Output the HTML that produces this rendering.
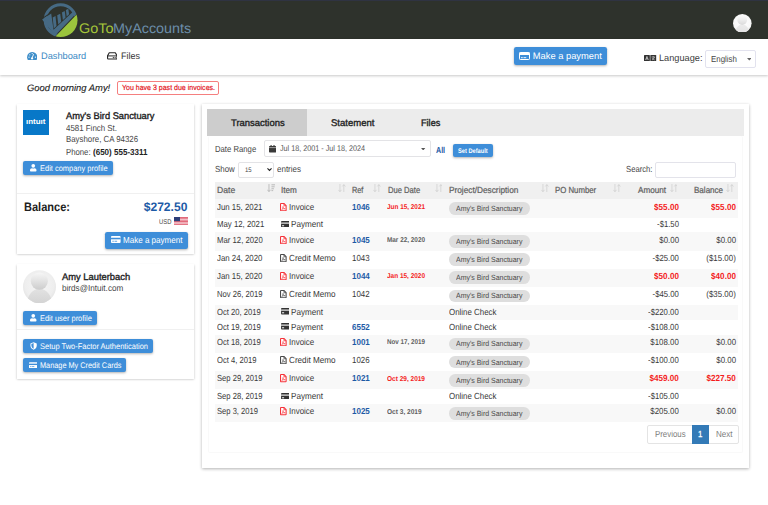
<!DOCTYPE html><html lang="en"><head><meta charset="utf-8"><title>GoToMyAccounts - Dashboard</title><style>

html,body{margin:0;padding:0;}
body{width:768px;height:505px;position:relative;overflow:hidden;background:#fff;font-family:"Liberation Sans",sans-serif;text-rendering:geometricPrecision;}
.b{position:absolute;display:block;}
.t{position:absolute;white-space:nowrap;display:block;transform-origin:0 0;}

</style></head><body>
<div class="b" style="left:0.00px;top:0.00px;width:768.00px;height:39.30px;background:#2e322c;"></div>
<div class="b" style="left:0.00px;top:0.00px;width:768.00px;height:1.30px;background:#2f3342;"></div>
<div class="b" style="left:0.00px;top:39.30px;width:768.00px;height:35.70px;background:#fff;box-shadow:0 1px 2.5px rgba(0,0,0,.22);"></div>
<div class="b" style="left:514.10px;top:47.10px;width:92.80px;height:17.50px;background:#3e8ed9;border-radius:2.2px;box-shadow:0 1px 2.5px rgba(0,0,0,.30);"></div>
<div class="b" style="left:704.60px;top:50.20px;width:51.40px;height:17.40px;background:#fff;border:1px solid #e2e2ee;box-sizing:border-box;border-radius:2px;"></div>
<div class="b" style="left:117.00px;top:81.10px;width:102.00px;height:13.50px;background:#fff;border:1px solid #f57f7f;box-sizing:border-box;border-radius:2px;"></div>
<div class="b" style="left:16.80px;top:104.00px;width:177.30px;height:149.90px;background:#fff;box-shadow:0 0.6px 2.2px rgba(0,0,0,.28);"></div>
<div class="b" style="left:23.00px;top:109.70px;width:25.80px;height:25.30px;background:#0878c8;"></div>
<div class="b" style="left:23.20px;top:161.00px;width:89.80px;height:13.90px;background:#3e8ed9;border-radius:2px;box-shadow:0 1px 2.5px rgba(0,0,0,.30);"></div>
<div class="b" style="left:16.80px;top:193.00px;width:177.30px;height:1.00px;background:#f0f0f0;"></div>
<div class="b" style="left:105.20px;top:232.00px;width:82.40px;height:16.90px;background:#3e8ed9;border-radius:2.2px;box-shadow:0 1px 2.5px rgba(0,0,0,.30);"></div>
<div class="b" style="left:16.80px;top:264.20px;width:177.30px;height:114.80px;background:#fff;box-shadow:0 0.6px 2.2px rgba(0,0,0,.28);"></div>
<div class="b" style="left:23.20px;top:311.30px;width:73.50px;height:13.40px;background:#3e8ed9;border-radius:2px;box-shadow:0 1px 2.5px rgba(0,0,0,.30);"></div>
<div class="b" style="left:16.80px;top:329.00px;width:177.30px;height:1.00px;background:#f0f0f0;"></div>
<div class="b" style="left:23.20px;top:339.00px;width:129.60px;height:13.80px;background:#3e8ed9;border-radius:2px;box-shadow:0 1px 2.5px rgba(0,0,0,.30);"></div>
<div class="b" style="left:23.20px;top:358.10px;width:103.20px;height:14.00px;background:#3e8ed9;border-radius:2px;box-shadow:0 1px 2.5px rgba(0,0,0,.30);"></div>
<div class="b" style="left:202.00px;top:103.80px;width:547.20px;height:364.00px;background:#fff;box-shadow:0 1px 3px rgba(0,0,0,.30);"></div>
<div class="b" style="left:207.10px;top:109.00px;width:536.50px;height:27.30px;background:#ececec;"></div>
<div class="b" style="left:207.10px;top:109.00px;width:99.90px;height:27.30px;background:#cdcdcd;"></div>
<div class="b" style="left:207.60px;top:135.90px;width:535.80px;height:317.60px;background:transparent;border:1px solid #f9f9f9;box-sizing:border-box;border-radius:2px;border-top:none;"></div>
<div class="b" style="left:264.00px;top:140.00px;width:166.50px;height:17.40px;background:#fff;border:1px solid #e3e3e6;box-sizing:border-box;border-radius:2px;"></div>
<div class="b" style="left:452.60px;top:144.40px;width:40.90px;height:12.20px;background:#3e8ed9;border-radius:2px;box-shadow:0 1px 2.5px rgba(0,0,0,.30);"></div>
<div class="b" style="left:237.50px;top:162.40px;width:36.90px;height:15.30px;background:#fff;border:1px solid #e3e3e6;box-sizing:border-box;border-radius:2px;"></div>
<div class="b" style="left:655.20px;top:162.00px;width:80.60px;height:15.70px;background:#fff;border:1px solid #e3e3ea;box-sizing:border-box;border-radius:2px;"></div>
<div class="b" style="left:214.80px;top:182.00px;width:523.20px;height:17.40px;background:#f0f0f0;"></div>
<div class="b" style="left:214.80px;top:199.40px;width:523.20px;height:18.13px;background:#f8f8f8;"></div>
<div class="b" style="left:448.80px;top:202.10px;width:81.00px;height:12.70px;background:#dedede;border-radius:6.4px;"></div>
<div class="b" style="left:214.80px;top:232.47px;width:523.20px;height:18.13px;background:#f8f8f8;"></div>
<div class="b" style="left:448.80px;top:235.17px;width:81.00px;height:12.70px;background:#dedede;border-radius:6.4px;"></div>
<div class="b" style="left:448.80px;top:253.30px;width:81.00px;height:12.70px;background:#dedede;border-radius:6.4px;"></div>
<div class="b" style="left:214.80px;top:268.73px;width:523.20px;height:18.13px;background:#f8f8f8;"></div>
<div class="b" style="left:448.80px;top:271.43px;width:81.00px;height:12.70px;background:#dedede;border-radius:6.4px;"></div>
<div class="b" style="left:448.80px;top:289.56px;width:81.00px;height:12.70px;background:#dedede;border-radius:6.4px;"></div>
<div class="b" style="left:214.80px;top:305.00px;width:523.20px;height:14.93px;background:#f8f8f8;"></div>
<div class="b" style="left:214.80px;top:334.86px;width:523.20px;height:18.13px;background:#f8f8f8;"></div>
<div class="b" style="left:448.80px;top:337.56px;width:81.00px;height:12.70px;background:#dedede;border-radius:6.4px;"></div>
<div class="b" style="left:448.80px;top:355.70px;width:81.00px;height:12.70px;background:#dedede;border-radius:6.4px;"></div>
<div class="b" style="left:214.80px;top:371.13px;width:523.20px;height:18.13px;background:#f8f8f8;"></div>
<div class="b" style="left:448.80px;top:373.83px;width:81.00px;height:12.70px;background:#dedede;border-radius:6.4px;"></div>
<div class="b" style="left:214.80px;top:404.20px;width:523.20px;height:18.13px;background:#f8f8f8;"></div>
<div class="b" style="left:448.80px;top:406.90px;width:81.00px;height:12.70px;background:#dedede;border-radius:6.4px;"></div>
<div class="b" style="left:647.20px;top:425.30px;width:91.50px;height:18.40px;background:#fff;border:1px solid #e4e4e4;box-sizing:border-box;border-radius:2px;"></div>
<div class="b" style="left:691.70px;top:425.30px;width:17.50px;height:18.40px;background:#337ab7;"></div>
<svg class="b" style="left:38.00px;top:0.00px" width="60.00" height="40.00" viewBox="38 0 60 40">
<defs>
<clipPath id="lc1"><polygon points="38,0 90.5,0 76.4,14.2 55.4,36 49,44 38,44"/></clipPath>
<clipPath id="lc2"><polygon points="91.200,-0.8 76.700,14.500 55.900,36.100 49,43.200 98,44 98,0"/></clipPath>
</defs>
<circle cx="60.600" cy="20.200" r="15.400" fill="none" stroke="#466a84" stroke-width="3" clip-path="url(#lc1)"/>
<circle cx="60.600" cy="20.200" r="16.900" fill="#9bc53d" clip-path="url(#lc2)"/>
<path d="M41.300,19.100L51.300,12.700M51.800,13.200L54.200,29" stroke="#2e322c" stroke-width="1.100" fill="none"/>
<polygon points="42.100,19.400 51.200,13.600 53.500,29.700 73.300,11.600 76.200,13.500 55,35.400" fill="#466a84"/>
<g fill="#466a84">
<polygon points="52.700,17.500 55.500,16.100 56.500,26.100 53.800,28.500"/>
<polygon points="57.200,15.300 60.200,13.700 61.200,21.800 58.300,24.500"/>
<polygon points="61.900,12.500 64.700,10.900 65.600,17.600 62.900,20.100"/>
<polygon points="65.900,9.900 68.300,8.700 69.100,14.200 66.700,16.400"/>
</g>
</svg>
<svg class="b" style="left:733.30px;top:13.80px" width="18.60" height="18.60" viewBox="0 0 40 40">
<defs><radialGradient id="ag" cx="50%" cy="45%" r="55%"><stop offset="0" stop-color="#ffffff"/><stop offset="0.800" stop-color="#f8f8f8"/><stop offset="1" stop-color="#ececec"/></radialGradient>
<linearGradient id="hg1" x1="0" y1="0" x2="0" y2="1"><stop offset="0" stop-color="#fbfbfb"/><stop offset="0.400" stop-color="#f0f0f0"/><stop offset="1" stop-color="#dadada"/></linearGradient>
<linearGradient id="bg1" x1="0" y1="0" x2="0" y2="1"><stop offset="0" stop-color="#ececec"/><stop offset="1" stop-color="#e2e2e2"/></linearGradient>
<clipPath id="ac"><circle cx="20" cy="20" r="20"/></clipPath></defs>
<circle cx="20" cy="20" r="20" fill="url(#ag)"/>
<g clip-path="url(#ac)"><path d="M4.500 41c1-10 6.500-18.500 15.500-18.500s14.500 8.500 15.500 18.500z" fill="url(#bg1)"/><circle cx="19.800" cy="13.200" r="10.400" fill="url(#hg1)"/></g>
</svg>
<svg class="b" style="left:27.00px;top:52.00px" width="10.40" height="8.00" viewBox="0 0 26 20">
<path d="M13 0A13 13 0 0 0 1.8 19.3c.3.5.8.7 1.3.7h19.8c.5 0 1-.2 1.300-.7A13 13 0 0 0 13 0z" fill="#3f8fca"/>
<circle cx="13" cy="4" r="1.5" fill="#fff"/><circle cx="5" cy="13" r="1.5" fill="#fff"/><circle cx="21" cy="13" r="1.5" fill="#fff"/><circle cx="7" cy="7" r="1.5" fill="#fff"/>
<path d="M17.500 5.500l-3.200 8.500a2.600 2.600 0 1 1-2-.6l3.300-8.600z" fill="#fff"/>
</svg>
<svg class="b" style="left:106.60px;top:52.20px" width="10.60" height="7.60" viewBox="0 0 28 20">
<path d="M6 2h16l4.500 8v6.500a2 2 0 0 1-2 2h-21a2 2 0 0 1-2-2v-6.500z" fill="none" stroke="#262626" stroke-width="3" stroke-linejoin="round"/>
<path d="M1.500 10.300h25" stroke="#262626" stroke-width="2.600"/>
<circle cx="21.500" cy="14.600" r="1.700" fill="#262626"/><circle cx="16.800" cy="14.600" r="1.700" fill="#262626"/>
</svg>
<svg class="b" style="left:519.10px;top:51.70px" width="11.00" height="8.00" viewBox="0 0 22 16">
<rect x="1" y="1" width="20" height="14" rx="1.500" fill="none" stroke="#fff" stroke-width="2"/>
<rect x="1" y="1" width="20" height="5" fill="#fff"/>
<rect x="4" y="10.500" width="3.500" height="1.800" fill="#fff"/><rect x="9" y="10.500" width="5.500" height="1.800" fill="#fff"/>
</svg>
<svg class="b" style="left:644.40px;top:55.00px" width="12.20" height="6.40" viewBox="0 0 24 12.600">
<rect x="0" y="0" width="11.500" height="12.600" rx="1" fill="#333"/><rect x="12.500" y="0" width="11.500" height="12.600" rx="1" fill="#333"/>
<path d="M3.200 9.800l2.600-7 2.600 7M4.200 7.600h3.200" stroke="#fff" stroke-width="1.200" fill="none"/>
<path d="M15 4h6.500M18.200 2.500v1.500M16 9.800c2.500-1.500 3.800-3.500 4.300-5.800M16.500 6c1 2 2.500 3.200 4.500 3.800" stroke="#fff" stroke-width="1.100" fill="none"/>
</svg>
<svg class="b" style="left:746.60px;top:58.20px" width="4.60" height="2.60" viewBox="0 0 10 5.600"><polygon points="0,0 10,0 5,5.600" fill="#666"/></svg>
<svg class="b" style="left:173.70px;top:217.30px" width="14.00" height="7.70" viewBox="0 0 28 15.400">
<rect width="28" height="15.400" fill="#fff"/>
<g fill="#d8384f"><rect y="0" width="28" height="1.500"/><rect y="2.800" width="28" height="1.500"/><rect y="5.600" width="28" height="1.500"/><rect y="8.400" width="28" height="1.500"/><rect y="11.200" width="28" height="1.500"/><rect y="13.900" width="28" height="1.500"/></g>
<rect width="12" height="8.400" fill="#2c3e78"/>
</svg>
<svg class="b" style="left:111.40px;top:236.40px" width="9.60" height="7.00" viewBox="0 0 22 16">
<rect x="0" y="0" width="22" height="16" rx="2" fill="#fff"/>
<rect x="0" y="4" width="22" height="3.600" fill="#3e8ed9"/>
<rect x="3" y="11" width="3.500" height="1.800" fill="#3e8ed9"/><rect x="8" y="11" width="6" height="1.800" fill="#3e8ed9"/>
</svg>
<svg class="b" style="left:23.40px;top:270.00px" width="33.00" height="33.40" viewBox="0 0 40 40">
<defs><radialGradient id="ag2" cx="50%" cy="45%" r="55%"><stop offset="0" stop-color="#f6f6f6"/><stop offset="0.800" stop-color="#eeeeee"/><stop offset="1" stop-color="#e4e4e4"/></radialGradient>
<linearGradient id="hg2" x1="0" y1="0" x2="0" y2="1"><stop offset="0" stop-color="#f6f6f6"/><stop offset="0.350" stop-color="#e8e8e8"/><stop offset="1" stop-color="#cdcdcd"/></linearGradient>
<linearGradient id="bg2" x1="0" y1="0" x2="0" y2="1"><stop offset="0" stop-color="#e2e2e2"/><stop offset="1" stop-color="#d3d3d3"/></linearGradient>
<clipPath id="ac2"><circle cx="20" cy="20" r="20"/></clipPath></defs>
<circle cx="20" cy="20" r="20" fill="url(#ag2)"/>
<g clip-path="url(#ac2)"><path d="M4.500 41c1-10 6.500-18.500 15.500-18.500s14.500 8.500 15.500 18.500z" fill="url(#bg2)"/><circle cx="19.800" cy="13.200" r="10.400" fill="url(#hg2)"/></g>
</svg>
<svg class="b" style="left:30.30px;top:164.20px" width="6.50" height="7.40" viewBox="0 0 448 512"><circle cx="224" cy="128" r="128" fill="#fff"/><path d="M313.600 288h-16.700c-22.200 10.200-46.900 16-72.900 16s-50.600-5.800-72.900-16h-16.700C60.200 288 0 348.200 0 422.400V464c0 26.500 21.500 48 48 48h352c26.500 0 48-21.500 48-48v-41.600c0-74.200-60.200-134.400-134.400-134.400z" fill="#fff"/></svg>
<svg class="b" style="left:30.30px;top:314.40px" width="6.50" height="7.40" viewBox="0 0 448 512"><circle cx="224" cy="128" r="128" fill="#fff"/><path d="M313.600 288h-16.700c-22.200 10.200-46.900 16-72.900 16s-50.600-5.800-72.900-16h-16.700C60.200 288 0 348.200 0 422.400V464c0 26.500 21.500 48 48 48h352c26.500 0 48-21.500 48-48v-41.600c0-74.200-60.200-134.400-134.400-134.400z" fill="#fff"/></svg>
<svg class="b" style="left:29.90px;top:342.00px" width="7.20" height="7.90" viewBox="0 0 16 17"><path d="M8 0L1 3v4.500c0 4.500 3 8 7 9.500 4-1.500 7-5 7-9.500V3z" fill="#fff"/><path d="M8 2.200v12.500c-2.800-1.300-4.900-4-4.900-7.300V4.400z" fill="#3e8ed9"/></svg>
<svg class="b" style="left:29.10px;top:361.90px" width="8.40" height="6.40" viewBox="0 0 22 16">
<rect x="0" y="0" width="22" height="16" rx="2" fill="#fff"/>
<rect x="0" y="4" width="22" height="3.600" fill="#3e8ed9"/>
<rect x="3" y="11" width="3.500" height="1.800" fill="#3e8ed9"/><rect x="8" y="11" width="6" height="1.800" fill="#3e8ed9"/>
</svg>
<svg class="b" style="left:269.20px;top:145.20px" width="7.10" height="7.60" viewBox="0 0 14 15"><rect x="0" y="2" width="14" height="13" rx="1.500" fill="#3a3a3a"/><rect x="3" y="0" width="2.200" height="4" fill="#3a3a3a"/><rect x="8.800" y="0" width="2.200" height="4" fill="#3a3a3a"/><rect x="0" y="5" width="14" height="1" fill="#fff"/></svg>
<svg class="b" style="left:421.30px;top:148.00px" width="4.40" height="2.40" viewBox="0 0 10 5.600"><polygon points="0,0 10,0 5,5.600" fill="#555"/></svg>
<svg class="b" style="left:267.40px;top:168.40px" width="5.00" height="3.30" viewBox="0 0 9 6"><path d="M0.800 0.800l3.700 3.700L8.200 0.800" stroke="#222" stroke-width="2" fill="none"/></svg>
<svg class="b" style="left:266.60px;top:184.20px" width="8.40" height="8.30" viewBox="0 0 17 16.500">
<path d="M4 0v15M0.800 11.500l3.200 3.800 3.200-3.800" stroke="#b4b4b4" stroke-width="1.700" fill="none"/>
<rect x="9" y="0.500" width="8" height="2" fill="#b8b8b8"/><rect x="9" y="4.500" width="6.500" height="2" fill="#b8b8b8"/><rect x="9" y="8.500" width="5" height="2" fill="#b8b8b8"/><rect x="9" y="12.300" width="3.500" height="2" fill="#b8b8b8"/></svg>
<svg class="b" style="left:338.00px;top:184.20px" width="7.80" height="8.30" viewBox="0 0 16 17">
<path d="M4 0v15.500M0.800 12l3.200 3.800 3.200-3.800" stroke="#cdcdcd" stroke-width="1.500" fill="none"/>
<path d="M12 17v-15.500M8.800 5l3.200-3.800 3.200 3.800" stroke="#cdcdcd" stroke-width="1.500" fill="none"/></svg>
<svg class="b" style="left:373.20px;top:184.20px" width="7.80" height="8.30" viewBox="0 0 16 17">
<path d="M4 0v15.500M0.800 12l3.200 3.800 3.200-3.800" stroke="#cdcdcd" stroke-width="1.500" fill="none"/>
<path d="M12 17v-15.500M8.800 5l3.200-3.800 3.200 3.800" stroke="#cdcdcd" stroke-width="1.500" fill="none"/></svg>
<svg class="b" style="left:434.60px;top:184.20px" width="7.80" height="8.30" viewBox="0 0 16 17">
<path d="M4 0v15.500M0.800 12l3.200 3.800 3.200-3.800" stroke="#cdcdcd" stroke-width="1.500" fill="none"/>
<path d="M12 17v-15.500M8.800 5l3.200-3.800 3.200 3.800" stroke="#cdcdcd" stroke-width="1.500" fill="none"/></svg>
<svg class="b" style="left:540.90px;top:184.20px" width="7.80" height="8.30" viewBox="0 0 16 17">
<path d="M4 0v15.500M0.800 12l3.200 3.800 3.200-3.800" stroke="#cdcdcd" stroke-width="1.500" fill="none"/>
<path d="M12 17v-15.500M8.800 5l3.200-3.800 3.200 3.800" stroke="#cdcdcd" stroke-width="1.500" fill="none"/></svg>
<svg class="b" style="left:613.40px;top:184.20px" width="7.80" height="8.30" viewBox="0 0 16 17">
<path d="M4 0v15.500M0.800 12l3.200 3.800 3.200-3.800" stroke="#cdcdcd" stroke-width="1.500" fill="none"/>
<path d="M12 17v-15.500M8.800 5l3.200-3.800 3.200 3.800" stroke="#cdcdcd" stroke-width="1.500" fill="none"/></svg>
<svg class="b" style="left:669.60px;top:184.20px" width="7.80" height="8.30" viewBox="0 0 16 17">
<path d="M4 0v15.500M0.800 12l3.200 3.800 3.200-3.800" stroke="#cdcdcd" stroke-width="1.500" fill="none"/>
<path d="M12 17v-15.500M8.800 5l3.200-3.800 3.200 3.800" stroke="#cdcdcd" stroke-width="1.500" fill="none"/></svg>
<svg class="b" style="left:726.40px;top:184.20px" width="7.80" height="8.30" viewBox="0 0 16 17">
<path d="M4 0v15.500M0.800 12l3.200 3.800 3.200-3.800" stroke="#cdcdcd" stroke-width="1.500" fill="none"/>
<path d="M12 17v-15.500M8.800 5l3.200-3.800 3.200 3.800" stroke="#cdcdcd" stroke-width="1.500" fill="none"/></svg>
<svg class="b" style="left:280.20px;top:202.60px" width="6.70" height="8.20" viewBox="0 0 13 16">
<path d="M2 1.100h6l3.900 3.900v9a1 1 0 0 1-1 1h-8.900a1 1 0 0 1-1-1v-11.900a1 1 0 0 1 1-1z" fill="#fff" stroke="#f5333a" stroke-width="2.100" stroke-linejoin="round"/>
<path d="M7.600 1.200v4.200h4.200" fill="none" stroke="#f5333a" stroke-width="1.500"/>
<path d="M3.400 12.600c1.500-1 2.700-3.200 2.900-5.400.100-.9-.8-.9-.7 0 .3 2.300 1.600 3.900 3.700 4.300 1 .100 1-.8 0-.7-2 .2-4 .8-5.900 1.800z" fill="none" stroke="#f5333a" stroke-width="1.100"/></svg>
<svg class="b" style="left:280.50px;top:220.83px" width="8.40" height="6.60" viewBox="0 0 20 16">
<rect x="0" y="0" width="20" height="16" rx="1.800" fill="#333"/>
<rect x="0" y="3.800" width="20" height="2.600" fill="#fff"/>
<rect x="2.400" y="10.400" width="5" height="2.400" fill="#fff"/></svg>
<svg class="b" style="left:280.20px;top:235.67px" width="6.70" height="8.20" viewBox="0 0 13 16">
<path d="M2 1.100h6l3.900 3.900v9a1 1 0 0 1-1 1h-8.900a1 1 0 0 1-1-1v-11.900a1 1 0 0 1 1-1z" fill="#fff" stroke="#f5333a" stroke-width="2.100" stroke-linejoin="round"/>
<path d="M7.600 1.200v4.200h4.200" fill="none" stroke="#f5333a" stroke-width="1.500"/>
<path d="M3.400 12.600c1.500-1 2.700-3.200 2.900-5.400.100-.9-.8-.9-.7 0 .3 2.300 1.600 3.900 3.700 4.300 1 .100 1-.8 0-.7-2 .2-4 .8-5.900 1.800z" fill="none" stroke="#f5333a" stroke-width="1.100"/></svg>
<svg class="b" style="left:280.20px;top:253.80px" width="6.70" height="8.20" viewBox="0 0 13 16">
<path d="M2 1.100h6l3.900 3.900v9a1 1 0 0 1-1 1h-8.900a1 1 0 0 1-1-1v-11.900a1 1 0 0 1 1-1z" fill="#fff" stroke="#4a4a4a" stroke-width="2.100" stroke-linejoin="round"/>
<path d="M7.600 1.200v4.200h4.200" fill="none" stroke="#4a4a4a" stroke-width="1.500"/>
<path d="M3.400 12.600c1.500-1 2.700-3.200 2.900-5.400.100-.9-.8-.9-.7 0 .3 2.300 1.600 3.900 3.700 4.300 1 .100 1-.8 0-.7-2 .2-4 .8-5.900 1.800z" fill="none" stroke="#4a4a4a" stroke-width="1.100"/></svg>
<svg class="b" style="left:280.20px;top:271.93px" width="6.70" height="8.20" viewBox="0 0 13 16">
<path d="M2 1.100h6l3.900 3.900v9a1 1 0 0 1-1 1h-8.900a1 1 0 0 1-1-1v-11.900a1 1 0 0 1 1-1z" fill="#fff" stroke="#f5333a" stroke-width="2.100" stroke-linejoin="round"/>
<path d="M7.600 1.200v4.200h4.200" fill="none" stroke="#f5333a" stroke-width="1.500"/>
<path d="M3.400 12.600c1.500-1 2.700-3.200 2.900-5.400.100-.9-.8-.9-.7 0 .3 2.300 1.600 3.900 3.700 4.300 1 .100 1-.8 0-.7-2 .2-4 .8-5.900 1.800z" fill="none" stroke="#f5333a" stroke-width="1.100"/></svg>
<svg class="b" style="left:280.20px;top:290.06px" width="6.70" height="8.20" viewBox="0 0 13 16">
<path d="M2 1.100h6l3.900 3.900v9a1 1 0 0 1-1 1h-8.900a1 1 0 0 1-1-1v-11.900a1 1 0 0 1 1-1z" fill="#fff" stroke="#4a4a4a" stroke-width="2.100" stroke-linejoin="round"/>
<path d="M7.600 1.200v4.200h4.200" fill="none" stroke="#4a4a4a" stroke-width="1.500"/>
<path d="M3.400 12.600c1.500-1 2.700-3.200 2.900-5.400.100-.9-.8-.9-.7 0 .3 2.300 1.600 3.900 3.700 4.300 1 .100 1-.8 0-.7-2 .2-4 .8-5.900 1.800z" fill="none" stroke="#4a4a4a" stroke-width="1.100"/></svg>
<svg class="b" style="left:280.50px;top:308.30px" width="8.40" height="6.60" viewBox="0 0 20 16">
<rect x="0" y="0" width="20" height="16" rx="1.800" fill="#333"/>
<rect x="0" y="3.800" width="20" height="2.600" fill="#fff"/>
<rect x="2.400" y="10.400" width="5" height="2.400" fill="#fff"/></svg>
<svg class="b" style="left:280.50px;top:323.23px" width="8.40" height="6.60" viewBox="0 0 20 16">
<rect x="0" y="0" width="20" height="16" rx="1.800" fill="#333"/>
<rect x="0" y="3.800" width="20" height="2.600" fill="#fff"/>
<rect x="2.400" y="10.400" width="5" height="2.400" fill="#fff"/></svg>
<svg class="b" style="left:280.20px;top:338.06px" width="6.70" height="8.20" viewBox="0 0 13 16">
<path d="M2 1.100h6l3.900 3.900v9a1 1 0 0 1-1 1h-8.900a1 1 0 0 1-1-1v-11.900a1 1 0 0 1 1-1z" fill="#fff" stroke="#f5333a" stroke-width="2.100" stroke-linejoin="round"/>
<path d="M7.600 1.200v4.200h4.200" fill="none" stroke="#f5333a" stroke-width="1.500"/>
<path d="M3.400 12.600c1.500-1 2.700-3.200 2.900-5.400.100-.9-.8-.9-.7 0 .3 2.300 1.600 3.900 3.700 4.300 1 .100 1-.8 0-.7-2 .2-4 .8-5.900 1.800z" fill="none" stroke="#f5333a" stroke-width="1.100"/></svg>
<svg class="b" style="left:280.20px;top:356.20px" width="6.70" height="8.20" viewBox="0 0 13 16">
<path d="M2 1.100h6l3.900 3.900v9a1 1 0 0 1-1 1h-8.900a1 1 0 0 1-1-1v-11.900a1 1 0 0 1 1-1z" fill="#fff" stroke="#4a4a4a" stroke-width="2.100" stroke-linejoin="round"/>
<path d="M7.600 1.200v4.200h4.200" fill="none" stroke="#4a4a4a" stroke-width="1.500"/>
<path d="M3.400 12.600c1.500-1 2.700-3.200 2.900-5.400.100-.9-.8-.9-.7 0 .3 2.300 1.600 3.900 3.700 4.300 1 .100 1-.8 0-.7-2 .2-4 .8-5.900 1.800z" fill="none" stroke="#4a4a4a" stroke-width="1.100"/></svg>
<svg class="b" style="left:280.20px;top:374.33px" width="6.70" height="8.20" viewBox="0 0 13 16">
<path d="M2 1.100h6l3.900 3.900v9a1 1 0 0 1-1 1h-8.900a1 1 0 0 1-1-1v-11.900a1 1 0 0 1 1-1z" fill="#fff" stroke="#f5333a" stroke-width="2.100" stroke-linejoin="round"/>
<path d="M7.600 1.200v4.200h4.200" fill="none" stroke="#f5333a" stroke-width="1.500"/>
<path d="M3.400 12.600c1.500-1 2.700-3.200 2.900-5.400.100-.9-.8-.9-.7 0 .3 2.300 1.600 3.900 3.700 4.300 1 .100 1-.8 0-.7-2 .2-4 .8-5.900 1.800z" fill="none" stroke="#f5333a" stroke-width="1.100"/></svg>
<svg class="b" style="left:280.50px;top:392.56px" width="8.40" height="6.60" viewBox="0 0 20 16">
<rect x="0" y="0" width="20" height="16" rx="1.800" fill="#333"/>
<rect x="0" y="3.800" width="20" height="2.600" fill="#fff"/>
<rect x="2.400" y="10.400" width="5" height="2.400" fill="#fff"/></svg>
<svg class="b" style="left:280.20px;top:407.40px" width="6.70" height="8.20" viewBox="0 0 13 16">
<path d="M2 1.100h6l3.900 3.900v9a1 1 0 0 1-1 1h-8.900a1 1 0 0 1-1-1v-11.900a1 1 0 0 1 1-1z" fill="#fff" stroke="#f5333a" stroke-width="2.100" stroke-linejoin="round"/>
<path d="M7.600 1.200v4.200h4.200" fill="none" stroke="#f5333a" stroke-width="1.500"/>
<path d="M3.400 12.600c1.500-1 2.700-3.200 2.900-5.400.100-.9-.8-.9-.7 0 .3 2.300 1.600 3.900 3.700 4.300 1 .100 1-.8 0-.7-2 .2-4 .8-5.900 1.800z" fill="none" stroke="#f5333a" stroke-width="1.100"/></svg>
<span class="t" style="top:16px;font-size:14px;line-height:24px;color:#a5c63a;transform:scaleX(1.0338);left:78.70px;">GoTo</span>
<span class="t" style="top:16px;font-size:14px;line-height:24px;color:#6c8eaa;transform:scaleX(1.0256);left:113.30px;">MyAccounts</span>
<span class="t" style="top:48px;font-size:9.33px;line-height:16px;color:#3a89c4;transform:scaleX(0.9903);left:40.60px;">Dashboard</span>
<span class="t" style="top:48px;font-size:9.33px;line-height:16px;color:#333;transform:scaleX(0.9643);left:120.60px;">Files</span>
<span class="t" style="top:48px;font-size:9.33px;line-height:16px;color:#fff;left:532.80px;">Make a payment</span>
<span class="t" style="top:50px;font-size:9.33px;line-height:16px;color:#3c3c3c;transform:scaleX(0.9862);left:658.80px;">Language:</span>
<span class="t" style="top:51px;font-size:8.8px;line-height:16px;color:#464646;transform:scaleX(0.8975);left:711.10px;">English</span>
<span class="t" style="top:80px;font-size:9.33px;line-height:16px;color:#1c1c1c;font-style:italic;-webkit-text-stroke:0.12px #1c1c1c;transform:scaleX(1.0071);left:26.60px;">Good morning Amy!</span>
<span class="t" style="top:80px;font-size:7.6px;line-height:16px;color:#e4141c;-webkit-text-stroke:0.18px #e4141c;transform:scaleX(0.9242);left:121.70px;">You have 3 past due invoices.</span>
<span class="t" style="top:114px;font-size:7.6px;line-height:16px;color:#fff;font-weight:700;transform:scaleX(1.0451);left:26.20px;">ıntuıt</span>
<span class="t" style="top:109px;font-size:9.6px;line-height:16px;color:#222;-webkit-text-stroke:0.36px #222;transform:scaleX(0.9682);left:65.50px;">Amy's Bird Sanctuary</span>
<span class="t" style="top:120px;font-size:8.8px;line-height:16px;color:#464646;transform:scaleX(0.8989);left:65.50px;">4581 Finch St.</span>
<span class="t" style="top:131px;font-size:8.8px;line-height:16px;color:#464646;transform:scaleX(0.8922);left:65.50px;">Bayshore, CA 94326</span>
<span class="t" style="top:144px;font-size:8.8px;line-height:16px;color:#464646;transform:scaleX(0.8820);left:65.50px;">Phone:</span>
<span class="t" style="top:144px;font-size:8.7px;line-height:16px;color:#222;font-weight:700;transform:scaleX(0.9247);left:92.50px;">(650) 555-3311</span>
<span class="t" style="top:161px;font-size:8.2px;line-height:16px;color:#fff;transform:scaleX(0.9112);left:40.20px;">Edit company profile</span>
<span class="t" style="top:199px;font-size:12.27px;line-height:16px;color:#222;font-weight:700;transform:scaleX(0.8995);left:23.50px;">Balance:</span>
<span class="t" style="top:199px;font-size:12.27px;line-height:16px;color:#1d5aa6;font-weight:700;transform:scaleX(0.9832);right:580.40px;transform-origin:100% 0;">$272.50</span>
<span class="t" style="top:215px;font-size:7px;line-height:16px;color:#444;transform:scaleX(0.8389);left:158.60px;">USD</span>
<span class="t" style="top:232px;font-size:8.8px;line-height:16px;color:#fff;transform:scaleX(0.9147);left:123.00px;">Make a payment</span>
<span class="t" style="top:270px;font-size:9.6px;line-height:16px;color:#222;-webkit-text-stroke:0.36px #222;transform:scaleX(0.9748);left:61.50px;">Amy Lauterbach</span>
<span class="t" style="top:280px;font-size:8.8px;line-height:16px;color:#464646;transform:scaleX(0.9268);left:61.50px;">birds@Intuit.com</span>
<span class="t" style="top:311px;font-size:8.2px;line-height:16px;color:#fff;transform:scaleX(0.9105);left:40.20px;">Edit user profile</span>
<span class="t" style="top:339px;font-size:8.2px;line-height:16px;color:#fff;transform:scaleX(0.9138);left:40.20px;">Setup Two-Factor Authentication</span>
<span class="t" style="top:358px;font-size:8.2px;line-height:16px;color:#fff;transform:scaleX(0.8944);left:40.20px;">Manage My Credit Cards</span>
<span class="t" style="top:116px;font-size:9.6px;line-height:16px;color:#222;-webkit-text-stroke:0.35px #222;transform:scaleX(0.9821);left:230.50px;">Transactions</span>
<span class="t" style="top:116px;font-size:9.6px;line-height:16px;color:#222;-webkit-text-stroke:0.35px #222;transform:scaleX(0.9946);left:331.00px;">Statement</span>
<span class="t" style="top:116px;font-size:9.6px;line-height:16px;color:#222;-webkit-text-stroke:0.35px #222;transform:scaleX(0.9524);left:421.20px;">Files</span>
<span class="t" style="top:141px;font-size:8.8px;line-height:16px;color:#464646;transform:scaleX(0.8775);left:214.80px;">Date Range</span>
<span class="t" style="top:141px;font-size:8.2px;line-height:16px;color:#585858;transform:scaleX(0.8808);left:280.30px;">Jul 18, 2001 - Jul 18, 2024</span>
<span class="t" style="top:142px;font-size:8.6px;line-height:16px;color:#1d5aa6;font-weight:700;transform:scaleX(0.8284);left:436.10px;">All</span>
<span class="t" style="top:144px;font-size:6.7px;line-height:16px;color:#fff;font-weight:700;transform:scaleX(0.8472);left:458.40px;">Set Default</span>
<span class="t" style="top:161px;font-size:8.8px;line-height:16px;color:#464646;transform:scaleX(0.8994);left:214.80px;">Show</span>
<span class="t" style="top:163px;font-size:6.6px;line-height:16px;color:#464646;transform:scaleX(0.8987);left:244.60px;">15</span>
<span class="t" style="top:161px;font-size:8.8px;line-height:16px;color:#464646;transform:scaleX(0.9089);left:277.00px;">entries</span>
<span class="t" style="top:161px;font-size:8.8px;line-height:16px;color:#464646;transform:scaleX(0.8738);left:625.80px;">Search:</span>
<span class="t" style="top:182px;font-size:8.8px;line-height:16px;color:#606060;-webkit-text-stroke:0.22px #606060;transform:scaleX(0.9788);left:217.20px;">Date</span>
<span class="t" style="top:182px;font-size:8.8px;line-height:16px;color:#606060;-webkit-text-stroke:0.22px #606060;transform:scaleX(0.9235);left:280.80px;">Item</span>
<span class="t" style="top:182px;font-size:8.8px;line-height:16px;color:#606060;-webkit-text-stroke:0.22px #606060;transform:scaleX(0.8319);left:352.30px;">Ref</span>
<span class="t" style="top:182px;font-size:8.8px;line-height:16px;color:#606060;-webkit-text-stroke:0.22px #606060;transform:scaleX(0.8662);left:387.60px;">Due Date</span>
<span class="t" style="top:182px;font-size:8.8px;line-height:16px;color:#606060;-webkit-text-stroke:0.22px #606060;transform:scaleX(0.9400);left:448.80px;">Project/Description</span>
<span class="t" style="top:182px;font-size:8.8px;line-height:16px;color:#606060;-webkit-text-stroke:0.22px #606060;transform:scaleX(0.8869);left:555.20px;">PO Number</span>
<span class="t" style="top:182px;font-size:8.8px;line-height:16px;color:#606060;-webkit-text-stroke:0.22px #606060;transform:scaleX(0.9265);left:638.00px;">Amount</span>
<span class="t" style="top:182px;font-size:8.8px;line-height:16px;color:#606060;-webkit-text-stroke:0.22px #606060;transform:scaleX(0.9152);left:694.10px;">Balance</span>
<span class="t" style="top:199px;font-size:8.8px;line-height:16px;color:#383838;transform:scaleX(0.8922);left:217.20px;">Jun 15, 2021</span>
<span class="t" style="top:199px;font-size:8.8px;line-height:16px;color:#383838;transform:scaleX(0.9076);left:288.70px;">Invoice</span>
<span class="t" style="top:199px;font-size:8.7px;line-height:16px;color:#1d5aa6;font-weight:700;transform:scaleX(0.9209);left:352.30px;">1046</span>
<span class="t" style="top:200px;font-size:7px;line-height:16px;color:#f41c1c;font-weight:700;transform:scaleX(0.9126);left:387.40px;">Jun 15, 2021</span>
<span class="t" style="top:201px;font-size:7.5px;line-height:16px;color:#484848;transform:scaleX(0.9291);left:456.20px;">Amy's Bird Sanctuary</span>
<span class="t" style="top:199px;font-size:8.8px;line-height:16px;color:#f41c1c;font-weight:700;transform:scaleX(0.9220);right:88.80px;transform-origin:100% 0;">$55.00</span>
<span class="t" style="top:199px;font-size:8.8px;line-height:16px;color:#f41c1c;font-weight:700;transform:scaleX(0.9220);right:31.90px;transform-origin:100% 0;">$55.00</span>
<span class="t" style="top:216px;font-size:8.8px;line-height:16px;color:#383838;transform:scaleX(0.8867);left:217.20px;">May 12, 2021</span>
<span class="t" style="top:216px;font-size:8.8px;line-height:16px;color:#383838;transform:scaleX(0.9217);left:291.00px;">Payment</span>
<span class="t" style="top:216px;font-size:8.8px;line-height:16px;color:#383838;transform:scaleX(0.8764);right:88.80px;transform-origin:100% 0;">-$1.50</span>
<span class="t" style="top:232px;font-size:8.8px;line-height:16px;color:#383838;transform:scaleX(0.8815);left:217.20px;">Mar 12, 2020</span>
<span class="t" style="top:232px;font-size:8.8px;line-height:16px;color:#383838;transform:scaleX(0.9076);left:288.70px;">Invoice</span>
<span class="t" style="top:232px;font-size:8.7px;line-height:16px;color:#1d5aa6;font-weight:700;transform:scaleX(0.9209);left:352.30px;">1045</span>
<span class="t" style="top:233px;font-size:7px;line-height:16px;color:#606060;font-weight:700;transform:scaleX(0.9122);left:387.40px;">Mar 22, 2020</span>
<span class="t" style="top:234px;font-size:7.5px;line-height:16px;color:#484848;transform:scaleX(0.9291);left:456.20px;">Amy's Bird Sanctuary</span>
<span class="t" style="top:232px;font-size:8.8px;line-height:16px;color:#383838;transform:scaleX(0.8936);right:88.80px;transform-origin:100% 0;">$0.00</span>
<span class="t" style="top:232px;font-size:8.8px;line-height:16px;color:#383838;transform:scaleX(0.8936);right:31.90px;transform-origin:100% 0;">$0.00</span>
<span class="t" style="top:250px;font-size:8.8px;line-height:16px;color:#383838;transform:scaleX(0.8922);left:217.20px;">Jan 24, 2020</span>
<span class="t" style="top:250px;font-size:8.8px;line-height:16px;color:#383838;transform:scaleX(0.9253);left:288.70px;">Credit Memo</span>
<span class="t" style="top:250px;font-size:8.8px;line-height:16px;color:#383838;transform:scaleX(0.8990);left:352.30px;">1043</span>
<span class="t" style="top:252px;font-size:7.5px;line-height:16px;color:#484848;transform:scaleX(0.9291);left:456.20px;">Amy's Bird Sanctuary</span>
<span class="t" style="top:250px;font-size:8.8px;line-height:16px;color:#383838;transform:scaleX(0.8806);right:88.80px;transform-origin:100% 0;">-$25.00</span>
<span class="t" style="top:250px;font-size:8.8px;line-height:16px;color:#383838;transform:scaleX(0.8979);right:31.90px;transform-origin:100% 0;">($15.00)</span>
<span class="t" style="top:268px;font-size:8.8px;line-height:16px;color:#383838;transform:scaleX(0.8922);left:217.20px;">Jan 15, 2020</span>
<span class="t" style="top:268px;font-size:8.8px;line-height:16px;color:#383838;transform:scaleX(0.9076);left:288.70px;">Invoice</span>
<span class="t" style="top:268px;font-size:8.7px;line-height:16px;color:#1d5aa6;font-weight:700;transform:scaleX(0.9209);left:352.30px;">1044</span>
<span class="t" style="top:269px;font-size:7px;line-height:16px;color:#f41c1c;font-weight:700;transform:scaleX(0.9209);left:387.40px;">Jan 15, 2020</span>
<span class="t" style="top:270px;font-size:7.5px;line-height:16px;color:#484848;transform:scaleX(0.9291);left:456.20px;">Amy's Bird Sanctuary</span>
<span class="t" style="top:268px;font-size:8.8px;line-height:16px;color:#f41c1c;font-weight:700;transform:scaleX(0.9220);right:88.80px;transform-origin:100% 0;">$50.00</span>
<span class="t" style="top:268px;font-size:8.8px;line-height:16px;color:#f41c1c;font-weight:700;transform:scaleX(0.9220);right:31.90px;transform-origin:100% 0;">$40.00</span>
<span class="t" style="top:286px;font-size:8.8px;line-height:16px;color:#383838;transform:scaleX(0.8671);left:217.20px;">Nov 26, 2019</span>
<span class="t" style="top:286px;font-size:8.8px;line-height:16px;color:#383838;transform:scaleX(0.9253);left:288.70px;">Credit Memo</span>
<span class="t" style="top:286px;font-size:8.8px;line-height:16px;color:#383838;transform:scaleX(0.8990);left:352.30px;">1042</span>
<span class="t" style="top:288px;font-size:7.5px;line-height:16px;color:#484848;transform:scaleX(0.9291);left:456.20px;">Amy's Bird Sanctuary</span>
<span class="t" style="top:286px;font-size:8.8px;line-height:16px;color:#383838;transform:scaleX(0.8806);right:88.80px;transform-origin:100% 0;">-$45.00</span>
<span class="t" style="top:286px;font-size:8.8px;line-height:16px;color:#383838;transform:scaleX(0.8979);right:31.90px;transform-origin:100% 0;">($35.00)</span>
<span class="t" style="top:304px;font-size:8.8px;line-height:16px;color:#383838;transform:scaleX(0.8699);left:217.20px;">Oct 20, 2019</span>
<span class="t" style="top:304px;font-size:8.8px;line-height:16px;color:#383838;transform:scaleX(0.9217);left:291.00px;">Payment</span>
<span class="t" style="top:304px;font-size:8.8px;line-height:16px;color:#383838;transform:scaleX(0.8994);left:448.80px;">Online Check</span>
<span class="t" style="top:304px;font-size:8.8px;line-height:16px;color:#383838;transform:scaleX(0.8837);right:88.80px;transform-origin:100% 0;">-$220.00</span>
<span class="t" style="top:319px;font-size:8.8px;line-height:16px;color:#383838;transform:scaleX(0.8699);left:217.20px;">Oct 19, 2019</span>
<span class="t" style="top:319px;font-size:8.8px;line-height:16px;color:#383838;transform:scaleX(0.9217);left:291.00px;">Payment</span>
<span class="t" style="top:319px;font-size:8.7px;line-height:16px;color:#1d5aa6;font-weight:700;transform:scaleX(0.9209);left:352.30px;">6552</span>
<span class="t" style="top:319px;font-size:8.8px;line-height:16px;color:#383838;transform:scaleX(0.8994);left:448.80px;">Online Check</span>
<span class="t" style="top:319px;font-size:8.8px;line-height:16px;color:#383838;transform:scaleX(0.8837);right:88.80px;transform-origin:100% 0;">-$108.00</span>
<span class="t" style="top:334px;font-size:8.8px;line-height:16px;color:#383838;transform:scaleX(0.8699);left:217.20px;">Oct 18, 2019</span>
<span class="t" style="top:334px;font-size:8.8px;line-height:16px;color:#383838;transform:scaleX(0.9076);left:288.70px;">Invoice</span>
<span class="t" style="top:334px;font-size:8.7px;line-height:16px;color:#1d5aa6;font-weight:700;transform:scaleX(0.9209);left:352.30px;">1001</span>
<span class="t" style="top:335px;font-size:7px;line-height:16px;color:#606060;font-weight:700;transform:scaleX(0.8958);left:387.40px;">Nov 17, 2019</span>
<span class="t" style="top:336px;font-size:7.5px;line-height:16px;color:#484848;transform:scaleX(0.9291);left:456.20px;">Amy's Bird Sanctuary</span>
<span class="t" style="top:334px;font-size:8.8px;line-height:16px;color:#383838;transform:scaleX(0.8957);right:88.80px;transform-origin:100% 0;">$108.00</span>
<span class="t" style="top:334px;font-size:8.8px;line-height:16px;color:#383838;transform:scaleX(0.8936);right:31.90px;transform-origin:100% 0;">$0.00</span>
<span class="t" style="top:352px;font-size:8.8px;line-height:16px;color:#383838;transform:scaleX(0.8664);left:217.20px;">Oct 4, 2019</span>
<span class="t" style="top:352px;font-size:8.8px;line-height:16px;color:#383838;transform:scaleX(0.9253);left:288.70px;">Credit Memo</span>
<span class="t" style="top:352px;font-size:8.8px;line-height:16px;color:#383838;transform:scaleX(0.8990);left:352.30px;">1026</span>
<span class="t" style="top:355px;font-size:7.5px;line-height:16px;color:#484848;transform:scaleX(0.9291);left:456.20px;">Amy's Bird Sanctuary</span>
<span class="t" style="top:352px;font-size:8.8px;line-height:16px;color:#383838;transform:scaleX(0.8837);right:88.80px;transform-origin:100% 0;">-$100.00</span>
<span class="t" style="top:352px;font-size:8.8px;line-height:16px;color:#383838;transform:scaleX(0.8936);right:31.90px;transform-origin:100% 0;">$0.00</span>
<span class="t" style="top:370px;font-size:8.8px;line-height:16px;color:#383838;transform:scaleX(0.8671);left:217.20px;">Sep 29, 2019</span>
<span class="t" style="top:370px;font-size:8.8px;line-height:16px;color:#383838;transform:scaleX(0.9076);left:288.70px;">Invoice</span>
<span class="t" style="top:370px;font-size:8.7px;line-height:16px;color:#1d5aa6;font-weight:700;transform:scaleX(0.9209);left:352.30px;">1021</span>
<span class="t" style="top:372px;font-size:7px;line-height:16px;color:#f41c1c;font-weight:700;transform:scaleX(0.9297);left:387.40px;">Oct 29, 2019</span>
<span class="t" style="top:373px;font-size:7.5px;line-height:16px;color:#484848;transform:scaleX(0.9291);left:456.20px;">Amy's Bird Sanctuary</span>
<span class="t" style="top:370px;font-size:8.8px;line-height:16px;color:#f41c1c;font-weight:700;transform:scaleX(0.9226);right:88.80px;transform-origin:100% 0;">$459.00</span>
<span class="t" style="top:370px;font-size:8.8px;line-height:16px;color:#f41c1c;font-weight:700;transform:scaleX(0.9226);right:31.90px;transform-origin:100% 0;">$227.50</span>
<span class="t" style="top:388px;font-size:8.8px;line-height:16px;color:#383838;transform:scaleX(0.8671);left:217.20px;">Sep 28, 2019</span>
<span class="t" style="top:388px;font-size:8.8px;line-height:16px;color:#383838;transform:scaleX(0.9217);left:291.00px;">Payment</span>
<span class="t" style="top:388px;font-size:8.8px;line-height:16px;color:#383838;transform:scaleX(0.8994);left:448.80px;">Online Check</span>
<span class="t" style="top:388px;font-size:8.8px;line-height:16px;color:#383838;transform:scaleX(0.8837);right:88.80px;transform-origin:100% 0;">-$105.00</span>
<span class="t" style="top:403px;font-size:8.8px;line-height:16px;color:#383838;transform:scaleX(0.8635);left:217.20px;">Sep 3, 2019</span>
<span class="t" style="top:403px;font-size:8.8px;line-height:16px;color:#383838;transform:scaleX(0.9076);left:288.70px;">Invoice</span>
<span class="t" style="top:403px;font-size:8.7px;line-height:16px;color:#1d5aa6;font-weight:700;transform:scaleX(0.9209);left:352.30px;">1025</span>
<span class="t" style="top:405px;font-size:7px;line-height:16px;color:#606060;font-weight:700;transform:scaleX(0.9359);left:387.40px;">Oct 3, 2019</span>
<span class="t" style="top:406px;font-size:7.5px;line-height:16px;color:#484848;transform:scaleX(0.9291);left:456.20px;">Amy's Bird Sanctuary</span>
<span class="t" style="top:403px;font-size:8.8px;line-height:16px;color:#383838;transform:scaleX(0.8957);right:88.80px;transform-origin:100% 0;">$205.00</span>
<span class="t" style="top:403px;font-size:8.8px;line-height:16px;color:#383838;transform:scaleX(0.8936);right:31.90px;transform-origin:100% 0;">$0.00</span>
<span class="t" style="top:426px;font-size:8.8px;line-height:16px;color:#7c7c7c;transform:scaleX(0.8938);left:654.60px;">Previous</span>
<span class="t" style="top:426px;font-size:8.8px;line-height:16px;color:#fff;-webkit-text-stroke:0.25px #fff;transform:scaleX(0.8968);left:698.30px;">1</span>
<span class="t" style="top:426px;font-size:8.8px;line-height:16px;color:#7c7c7c;transform:scaleX(0.9119);left:715.60px;">Next</span>
</body></html>
